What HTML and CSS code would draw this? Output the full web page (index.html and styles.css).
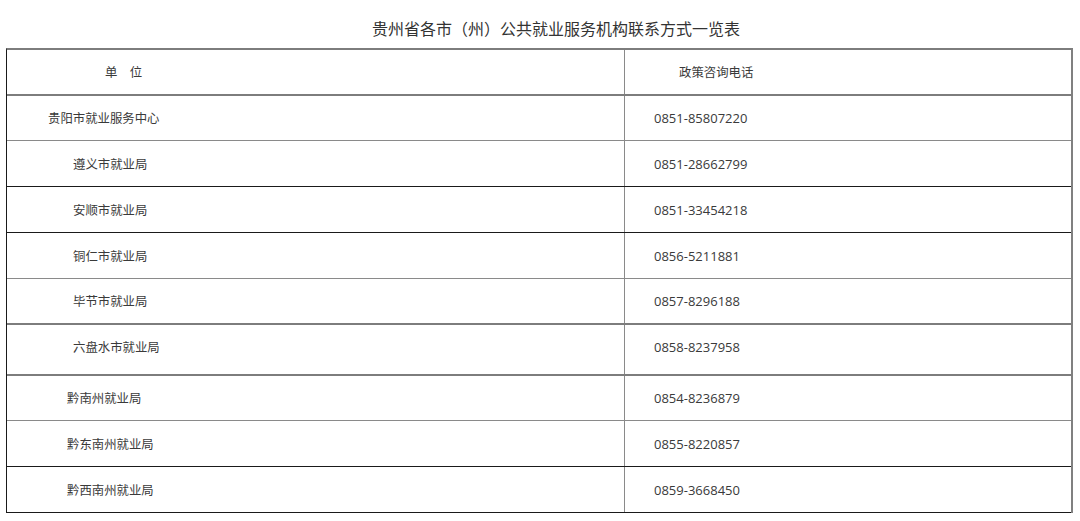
FILE: index.html
```html
<!DOCTYPE html>
<html lang="zh-CN">
<head>
<meta charset="utf-8">
<title>贵州省各市（州）公共就业服务机构联系方式一览表</title>
<link rel="stylesheet" href="styles.css">
</head>
<body>
<div class="title">贵州省各市（州）公共就业服务机构联系方式一览表</div>
<div class="table">
  <div class="row head b2g">
    <div class="c1 in-head">单　位</div>
    <div class="c2 in-head2">政策咨询电话</div>
  </div>
  <div class="row h45 b1g">
    <div class="c1 in-a">贵阳市就业服务中心</div>
    <div class="c2 num">0851-85807220</div>
  </div>
  <div class="row b1k">
    <div class="c1 in-b">遵义市就业局</div>
    <div class="c2 num">0851-28662799</div>
  </div>
  <div class="row b1k">
    <div class="c1 in-b">安顺市就业局</div>
    <div class="c2 num">0851-33454218</div>
  </div>
  <div class="row b1g">
    <div class="c1 in-b">铜仁市就业局</div>
    <div class="c2 num">0856-5211881</div>
  </div>
  <div class="row b2g">
    <div class="c1 in-b">毕节市就业局</div>
    <div class="c2 num">0857-8296188</div>
  </div>
  <div class="row h51 b2g raise">
    <div class="c1 in-b">六盘水市就业局</div>
    <div class="c2 num">0858-8237958</div>
  </div>
  <div class="row h45 b1g">
    <div class="c1 in-c">黔南州就业局</div>
    <div class="c2 num">0854-8236879</div>
  </div>
  <div class="row b1k">
    <div class="c1 in-c">黔东南州就业局</div>
    <div class="c2 num">0855-8220857</div>
  </div>
  <div class="row b1k">
    <div class="c1 in-c">黔西南州就业局</div>
    <div class="c2 num">0859-3668450</div>
  </div>
</div>
</body>
</html>
```

FILE: styles.css
```css
html, body {
  margin: 0;
  padding: 0;
  background: #ffffff;
}
body {
  font-family: "Noto Sans CJK SC", "Noto Sans", sans-serif;
  color: #3a3a3a;
}
.title {
  box-sizing: border-box;
  height: 48px;
  padding-top: 7px;
  padding-left: 32px;
  display: flex;
  align-items: center;
  justify-content: center;
  font-size: 16px;
  color: #333333;
}
.table {
  margin-left: 6px;
  width: 1067px;
  box-sizing: border-box;
  border-top: 2px solid #7d7d7d;
  border-left: 1px solid #1a1a1a;
  border-right: 2px solid #808080;
}
.row {
  box-sizing: border-box;
  height: 46px;
  display: grid;
  grid-template-columns: 617px 1fr;
}
.row.h45 { height: 45px; }
.row.h51 { height: 51px; }
.b1g { border-bottom: 1px solid #8a8a8a; }
.b1k { border-bottom: 1px solid #1a1a1a; }
.b2g { border-bottom: 2px solid #7d7d7d; }
.c1, .c2 {
  display: flex;
  align-items: center;
  font-size: 12.4px;
  white-space: nowrap;
}
.raise .c1, .raise .c2 {
  padding-bottom: 5px;
}
.c2 {
  border-left: 1px solid #8a8a8a;
}
.num {
  font-family: "Open Sans", "Noto Sans", sans-serif;
  font-size: 13px;
  padding-left: 29px;
  color: #3a3a3a;
}
.in-head { padding-left: 98px; }
.in-head2 { padding-left: 54px; }
.in-a { padding-left: 41px; }
.in-b { padding-left: 66px; }
.in-c { padding-left: 60px; }
```
